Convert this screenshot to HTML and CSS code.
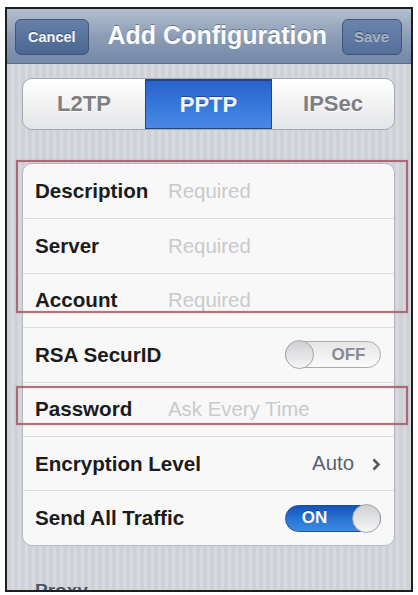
FILE: index.html
```html
<!DOCTYPE html>
<html>
<head>
<meta charset="utf-8">
<link rel="stylesheet" href="styles.css">
</head>
<body>
<div class="frame">
  <div class="navbar">
    <div class="navbtn">Cancel</div>
    <div class="navtitle">Add Configuration</div>
    <div class="navbtn disabled">Save</div>
  </div>
  <div class="content">
    <div class="segmented">
      <div class="seg">L2TP</div>
      <div class="seg selected">PPTP</div>
      <div class="seg">IPSec</div>
    </div>
    <div class="card">
      <div class="row"><span class="label">Description</span><span class="placeholder">Required</span></div>
      <div class="row"><span class="label">Server</span><span class="placeholder">Required</span></div>
      <div class="row"><span class="label">Account</span><span class="placeholder">Required</span></div>
      <div class="row"><span class="label">RSA SecurID</span>
        <div class="switch off"><span class="knob"></span><span class="swtext">OFF</span></div>
      </div>
      <div class="row"><span class="label">Password</span><span class="placeholder">Ask Every Time</span></div>
      <div class="row"><span class="label">Encryption Level</span>
        <span class="detail">Auto<svg class="chev" width="9" height="13" viewBox="0 0 9 13"><polyline points="1.5,1.5 6.5,6.5 1.5,11.5" fill="none" stroke="#555a62" stroke-width="2.6"/></svg></span>
      </div>
      <div class="row"><span class="label">Send All Traffic</span>
        <div class="switch on"><span class="swtext">ON</span><span class="knob"></span></div>
      </div>
    </div>
    <div class="section-header">Proxy</div>
  </div>
  <div class="highlight hl-top"></div>
  <div class="highlight hl-pass"></div>
</div>
</body>
</html>
```

FILE: styles.css
```css
* { box-sizing: border-box; }
html, body { margin: 0; padding: 0; background: #ffffff; }
body {
  font-family: "Liberation Sans", Arial, sans-serif;
  width: 418px;
  height: 595px;
  overflow: hidden;
}
.frame {
  position: relative;
  margin: 7px 5px 0 5px;
  height: 585px;
  border: 2px solid #1e1e1e;
  overflow: hidden;
  background: repeating-linear-gradient(90deg, #ced2d7 0px, #ced2d7 4px, #d6d9dd 4px, #d6d9dd 7px);
}
.navbar {
  height: 55px;
  display: flex;
  align-items: center;
  justify-content: space-between;
  padding: 0 10px 0 8px;
  background: linear-gradient(#b4bfcf 0%, #8d9db6 50%, #7288a7 100%);
  border-bottom: 1px solid #5d6f88;
}
.navbtn {
  height: 36px;
  padding: 0 12px;
  display: flex;
  align-items: center;
  border-radius: 6px;
  background: linear-gradient(#6580a8, #4b6791);
  border: 1px solid #3f5679;
  color: #f4f6fa;
  font-weight: bold;
  font-size: 14.5px;
  text-shadow: 0 -1px 0 rgba(0,0,0,0.35);
  margin-top: 1px;
}
.navbtn.disabled {
  color: rgba(230,236,246,0.6);
  background: linear-gradient(#6a84ab, #56709a);
  padding: 0 12px 0 11px;
  font-size: 15px;
  margin-right: -1px;
}
.navtitle {
  color: #fbfcfd;
  font-weight: bold;
  font-size: 25px;
  text-shadow: 0 -1px 0 rgba(40,55,80,0.45);
  margin-top: -2px;
  margin-left: 4px;
}
.content {
  padding: 14px 16px 0 15px;
}
.segmented {
  display: flex;
  height: 52px;
  border-radius: 10px;
  border: 1px solid #a7abb1;
  overflow: hidden;
  background: linear-gradient(#ffffff, #e4e5e7);
}
.seg {
  flex: 1;
  display: flex;
  align-items: center;
  justify-content: center;
  font-weight: bold;
  font-size: 22px;
  color: #7d7f83;
  text-shadow: 0 1px 0 #ffffff;
}
.seg.selected {
  flex: 0 0 127px;
  background: linear-gradient(#2a62cc, #3779dc 55%, #4b88e4);
  color: #f2f6fc;
  border: 1px solid #22477f;
  border-top-width: 2px;
  text-shadow: 0 -1px 0 rgba(0,0,40,0.35);
}
.card {
  margin-top: 33px;
  background: #f8f8f8;
  border: 1px solid #b6babf;
  border-radius: 10px;
  overflow: hidden;
}
.row {
  height: 54.4px;
  display: flex;
  align-items: center;
  padding: 0 13px 0 12px;
  border-top: 1px solid #dcdddf;
}
.row:first-child { border-top: none; }
.label {
  width: 133px;
  flex: 0 0 auto;
  font-weight: bold;
  font-size: 20.6px;
  color: #1b1b1c;
  white-space: nowrap;
}
.placeholder {
  font-size: 20.4px;
  color: #c9cacc;
}
.detail {
  margin-left: auto;
  display: flex;
  align-items: center;
  gap: 18px;
  font-size: 20.4px;
  color: #58606f;
}
.chev { display: block; margin-top: 1px; }
.switch {
  margin-left: auto;
  width: 96px;
  height: 27px;
  border-radius: 14px;
  display: flex;
  align-items: center;
  font-weight: bold;
  font-size: 17px;
}
.switch.off {
  background: linear-gradient(#e6e6e7, #fbfbfb);
  border: 1px solid #a9abae;
  color: #8a8c90;
}
.switch.on {
  background: linear-gradient(#1554b8, #2b78d9 60%, #3f8ae4);
  border: 1px solid #1d4f9a;
  color: #ffffff;
  text-shadow: 0 -1px 0 rgba(0,0,0,0.3);
}
.knob {
  width: 29px;
  height: 29px;
  flex: 0 0 29px;
  border-radius: 50%;
  background: linear-gradient(#cfd0d2, #f6f6f7);
  border: 1px solid #a4a6aa;
  margin: -1px;
}
.swtext {
  flex: 1;
  text-align: center;
}
.switch.off .swtext { padding-left: 4px; }
.switch.on .swtext { padding-right: 10px; }
.section-header {
  margin-top: 34px;
  padding-left: 13px;
  font-weight: bold;
  font-size: 19px;
  color: #4c566a;
  text-shadow: 0 1px 0 rgba(255,255,255,0.7);
}
.highlight {
  position: absolute;
  border: 2px solid rgba(160, 80, 95, 0.8);
  box-shadow: 0 0 2px rgba(210,130,140,0.5), inset 0 0 2px rgba(210,130,140,0.4);
}
.hl-top {
  left: 9px;
  top: 151px;
  width: 392px;
  height: 153px;
}
.hl-pass {
  left: 9px;
  top: 377px;
  width: 392px;
  height: 39px;
}
```
